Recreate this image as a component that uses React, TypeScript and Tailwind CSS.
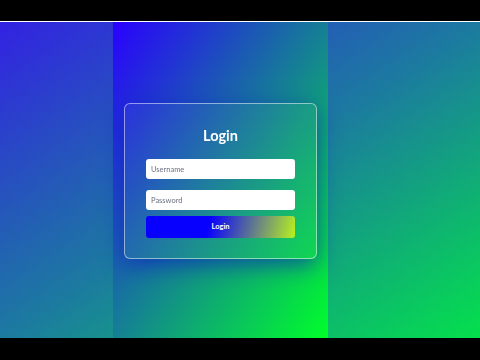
export default function App() {
  return (
    <div
      className="w-[480px] h-[360px] bg-black flex flex-col overflow-hidden"
      style={{ fontFamily: "Lato, 'Open Sans', sans-serif" }}
    >
      {/* letterbox top */}
      <div className="h-[21px] shrink-0" />
      <div className="h-px shrink-0 bg-white" />

      {/* video area */}
      <div className="h-[316px] shrink-0 flex bg-[linear-gradient(to_bottom_right,#3222e2,#1c7aa0,#04e04c)]">
        <div className="w-[113px] shrink-0" />
        <div className="w-[215px] shrink-0 flex items-center justify-center bg-[linear-gradient(to_bottom_right,#2a00ff,#00ff2a)]">
          <div className="mt-[2px] w-[193px] rounded-[6px] border border-white/50 bg-white/[0.04] backdrop-blur-sm shadow-[0_6px_22px_rgba(10,20,200,0.6)] px-[21px] pt-[22px] pb-[20px] flex flex-col">
            <h1 className="h-[20px] leading-[20px] text-center text-white font-bold text-[14.5px]">Login</h1>
            <input
              className="mt-[13px] h-[20px] rounded-[3px] bg-white px-[5px] text-[7.5px] text-gray-700 placeholder:text-gray-500 outline-none"
              placeholder="Username"
            />
            <input
              type="password"
              className="mt-[11px] h-[20px] rounded-[3px] bg-white px-[5px] text-[7.5px] text-gray-700 placeholder:text-gray-500 outline-none"
              placeholder="Password"
            />
            <button className="mt-[6px] h-[22px] rounded-[3px] bg-[linear-gradient(105deg,#0800ff_42%,#b8f21e)] text-white font-bold text-[7.5px]">
              Login
            </button>
          </div>
        </div>
        <div className="flex-1" />
      </div>

      {/* letterbox bottom */}
      <div className="flex-1" />
    </div>
  );
}
